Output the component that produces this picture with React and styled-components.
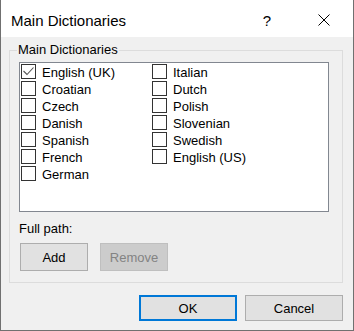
import styled, { createGlobalStyle } from "styled-components";

const GlobalStyle = createGlobalStyle`
  html, body {
    margin: 0;
    padding: 0;
    background: #f0f0f0;
  }
  * {
    box-sizing: border-box;
  }
`;

const Window = styled.div`
  width: 354px;
  height: 331px;
  display: flex;
  flex-direction: column;
  background: #f0f0f0;
  border-left: 1px solid #707070;
  border-right: 1px solid #707070;
  border-bottom: 1px solid #707070;
  font-family: "Liberation Sans", Arial, sans-serif;
  font-size: 13px;
  color: #000;
`;

const TitleBar = styled.div`
  height: 37px;
  flex-shrink: 0;
  display: flex;
  align-items: center;
  padding: 3px 6px 0 10px;
  background: #fff;
`;

const Title = styled.div`
  font-size: 15px;
  flex: 1;
`;

const TitleButton = styled.div`
  width: ${(p) => p.$width}px;
  height: 30px;
  display: flex;
  align-items: center;
  justify-content: center;
  font-size: 15px;
  margin-left: ${(p) => p.$gap || 0}px;
`;

const Content = styled.div`
  flex: 1;
  padding: 5px 10px 0 8px;
`;

const Group = styled.fieldset`
  margin: 0;
  min-width: 0;
  border: 1px solid #dcdcdc;
  padding: 4px 13px 11px 9px;
`;

const Legend = styled.legend`
  margin-left: -2px;
  padding: 0 1px;
  line-height: 16px;
`;

const List = styled.div`
  height: 150px;
  background: #fff;
  border: 1px solid #828790;
  padding: 1px 0 0 1px;
  display: grid;
  grid-template-rows: repeat(7, 17px);
  grid-auto-flow: column;
  grid-auto-columns: 131px;
  align-content: start;
`;

const Item = styled.div`
  display: flex;
  align-items: flex-start;
  line-height: 17px;
  white-space: nowrap;
`;

const Box = styled.span`
  width: 15px;
  height: 15px;
  flex-shrink: 0;
  margin-right: 6px;
  border: 1px solid #333;
  background: #fff;
  display: flex;
`;

const PathLabel = styled.div`
  margin-top: 8px;
  line-height: 17px;
`;

const ButtonRow = styled.div`
  display: flex;
  gap: 12px;
  margin-top: 6px;
  padding-left: 1px;
`;

const Button = styled.button`
  width: ${(p) => p.$width}px;
  height: ${(p) => p.$height}px;
  padding: 0;
  font-family: "Liberation Sans", Arial, sans-serif;
  font-size: 13px;
  color: ${(p) => (p.disabled ? "#838383" : "#000")};
  background: ${(p) => (p.disabled ? "#cccccc" : "#e1e1e1")};
  border: ${(p) =>
    p.$default ? "2px solid #0078d7" : p.disabled ? "1px solid #bfbfbf" : "1px solid #adadad"};
`;

const Footer = styled.div`
  display: flex;
  justify-content: flex-end;
  gap: 8px;
  margin-top: 12px;
`;

const Check = () => (
  <svg width="13" height="13" viewBox="0 0 13 13">
    <polyline points="1.5,6 5,9.5 11.5,2.5" fill="none" stroke="#555" strokeWidth="1.1" />
  </svg>
);

const CloseIcon = () => (
  <svg width="12" height="12" viewBox="0 0 12 12">
    <path d="M0.5 0.5 L11.5 11.5 M11.5 0.5 L0.5 11.5" stroke="#000" strokeWidth="1" />
  </svg>
);

const languages = [
  ["English (UK)", true],
  ["Croatian"],
  ["Czech"],
  ["Danish"],
  ["Spanish"],
  ["French"],
  ["German"],
  ["Italian"],
  ["Dutch"],
  ["Polish"],
  ["Slovenian"],
  ["Swedish"],
  ["English (US)"],
];

export default function App() {
  return (
    <>
      <GlobalStyle />
      <Window>
        <TitleBar>
          <Title>Main Dictionaries</Title>
          <TitleButton $width={36}>?</TitleButton>
          <TitleButton $width={46} $gap={16}>
            <CloseIcon />
          </TitleButton>
        </TitleBar>
        <Content>
          <Group>
            <Legend>Main Dictionaries</Legend>
            <List>
              {languages.map(([name, checked]) => (
                <Item key={name}>
                  <Box>{checked && <Check />}</Box>
                  {name}
                </Item>
              ))}
            </List>
            <PathLabel>Full path:</PathLabel>
            <ButtonRow>
              <Button $width={68} $height={28}>Add</Button>
              <Button $width={68} $height={28} disabled>
                Remove
              </Button>
            </ButtonRow>
          </Group>
          <Footer>
            <Button $width={98} $height={26} $default>
              OK
            </Button>
            <Button $width={98} $height={26}>Cancel</Button>
          </Footer>
        </Content>
      </Window>
    </>
  );
}
